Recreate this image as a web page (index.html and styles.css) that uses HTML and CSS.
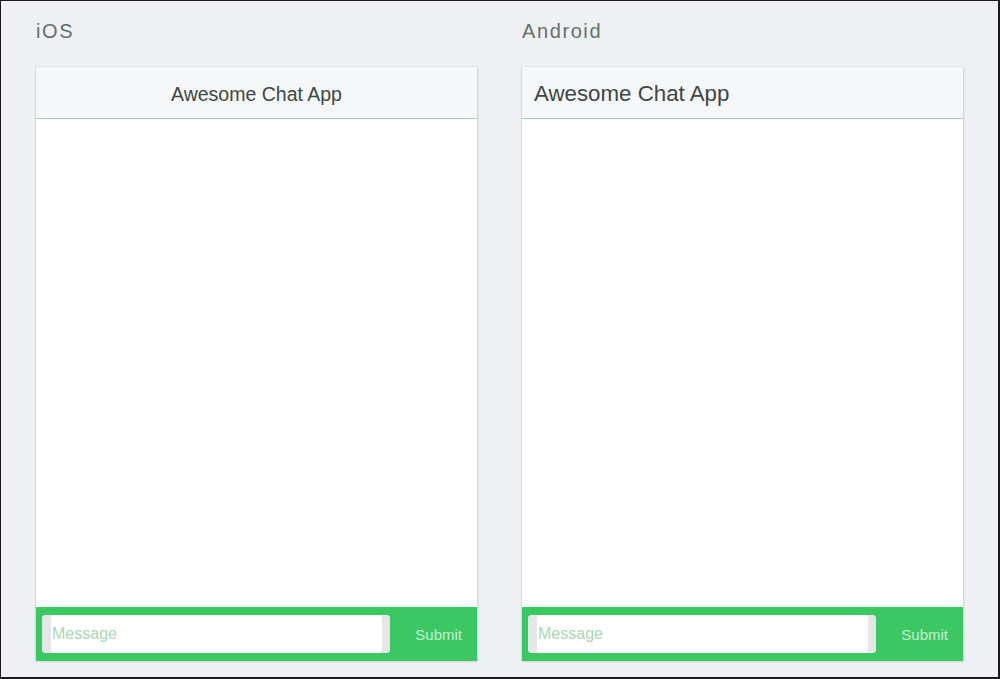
FILE: index.html
```html
<!DOCTYPE html>
<html>
<head>
<meta charset="utf-8">
<link rel="stylesheet" href="styles.css">
</head>
<body>
<div class="frame">
  <div class="column">
    <div class="label">iOS</div>
    <div class="phone">
      <div class="header header-ios">Awesome Chat App</div>
      <div class="messages"></div>
      <div class="footer">
        <div class="input">Message</div>
        <div class="submit">Submit</div>
      </div>
    </div>
  </div>
  <div class="column">
    <div class="label">Android</div>
    <div class="phone">
      <div class="header header-android">Awesome Chat App</div>
      <div class="messages"></div>
      <div class="footer">
        <div class="input">Message</div>
        <div class="submit">Submit</div>
      </div>
    </div>
  </div>
</div>
</body>
</html>
```
FILE: styles.css
```css
html, body {
  margin: 0;
  padding: 0;
}
body {
  width: 1000px;
  height: 679px;
  background: #eff0f4;
  font-family: "Liberation Sans", Arial, sans-serif;
}
.frame {
  box-sizing: border-box;
  width: 1000px;
  height: 679px;
  border: 1px solid #1b1b1f;
  border-width: 1px 2px 2px 1px;
  display: flex;
  gap: 45px;
  padding: 0 0 0 35px;
}
.column {
  width: 441px;
  display: flex;
  flex-direction: column;
}
.label {
  height: 66px;
  box-sizing: border-box;
  padding-top: 19px;
  font-size: 20px;
  letter-spacing: 1.6px;
  color: #63706a;
}
.phone {
  background: #fff;
  height: 594px;
  display: flex;
  flex-direction: column;
  box-shadow: -1px 0 0 #d6d7da, 1px 0 0 #d6d7da, 0 -1px 0 #e2e3e6, 1px 1px 2px rgba(0,0,0,0.12);
}
.header {
  border-bottom: 1px solid #9ed8ac;
  background: #f6f7f8;
  color: #3c4842;
  display: flex;
  align-items: center;
  padding-top: 3px;
  box-sizing: border-box;
  height: 52px;
}
.header-ios {
  justify-content: center;
  font-size: 19.5px;
}
.header-android {
  padding-left: 12px;
  font-size: 22.3px;
}
.messages {
  flex: 1;
}
.footer {
  height: 54px;
  background: #3bc863;
  display: flex;
  align-items: center;
  padding: 0 15px 0 6px;
}
.input {
  width: 348px;
  height: 38px;
  box-sizing: border-box;
  background: #fff;
  border-radius: 4px;
  box-shadow: inset 9px 0 0 #e4e6e8, inset -8px 0 0 #e4e6e8;
  padding-left: 10px;
  display: flex;
  align-items: center;
  font-size: 16px;
  color: #a9d7b4;
}
.submit {
  margin-left: auto;
  font-size: 15px;
  color: #c8ecd2;
}
```
